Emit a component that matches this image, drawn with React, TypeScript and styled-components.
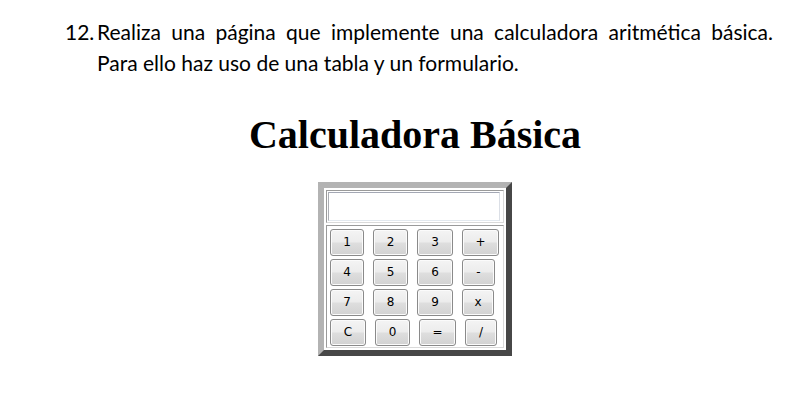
import React from "react";
import styled, { createGlobalStyle } from "styled-components";

const Global = createGlobalStyle`
  html, body { margin: 0; padding: 0; background: #ffffff; }
  body { width: 794px; height: 400px; overflow: hidden; }
`;

const Page = styled.div`
  padding: 16px 21px 0 65px;
`;

const Item = styled.div`
  display: flex;
  font-family: Lato, "Open Sans", sans-serif;
  font-size: 21px;
  line-height: 31px;
  color: #000;
`;

const Num = styled.span`
  flex: 0 0 32px;
`;

const Para = styled.p`
  margin: 0;
  flex: 1;
`;

const Line = styled.span<{ $full?: boolean }>`
  display: block;
  text-align: ${(p) => (p.$full ? "justify" : "left")};
  text-align-last: ${(p) => (p.$full ? "justify" : "left")};
`;

const Figure = styled.div`
  margin-left: -8px;
  display: flex;
  flex-direction: column;
  align-items: center;
`;

const Title = styled.h1`
  margin: 33px 0 0;
  font-family: "Liberation Serif", serif;
  font-weight: bold;
  font-size: 40px;
  line-height: 48px;
  color: #000;
`;

const Frame = styled.div`
  margin-top: 23px;
  width: 178px;
  padding: 2px;
  border: 6px solid;
  border-color: #b3b3b3 #474747 #474747 #b3b3b3;
  display: flex;
  flex-direction: column;
  gap: 2px;
`;

const Cell = styled.div<{ $pad: string }>`
  border: 1px solid;
  border-color: #9a9a9a #dadada #dadada #9a9a9a;
  padding: ${(p) => p.$pad};
`;

const Display = styled.input`
  display: block;
  box-sizing: border-box;
  width: 172px;
  height: 29px;
  margin: 0;
  border: 1px solid #abadb3;
  border-top-color: #a4a8b4;
  border-bottom-color: #e3e9ef;
  border-right-color: #dbdfe6;
  background: #fff;
  outline: none;
`;

const Keys = styled.div`
  display: flex;
  flex-direction: column;
  gap: 3px;
`;

const Row = styled.div`
  display: flex;
  gap: 9px;
`;

const Key = styled.button<{ $w: number }>`
  box-sizing: border-box;
  width: ${(p) => p.$w}px;
  height: 27px;
  padding: 0;
  margin: 0;
  border: 1px solid #8a8a8a;
  border-radius: 3px;
  background: linear-gradient(#f4f4f4 0%, #ececec 48%, #dedede 52%, #d2d2d2 100%);
  box-shadow: inset 0 0 0 1px #fbfbfb;
  font-family: "DejaVu Sans", Verdana, sans-serif;
  font-size: 12px;
  color: #000;
  line-height: 25px;
  text-align: center;
`;

const rows: [string, number][][] = [
  [["1", 34], ["2", 35], ["3", 36], ["+", 37]],
  [["4", 34], ["5", 35], ["6", 36], ["-", 33]],
  [["7", 34], ["8", 35], ["9", 36], ["x", 32]],
  [["C", 36], ["0", 35], ["=", 37], ["/", 32]],
];

export default function App() {
  return (
    <>
      <Global />
      <Page>
        <Item>
          <Num>12.</Num>
          <Para>
            <Line $full>Realiza una página que implemente una calculadora aritmética básica.</Line>
            <Line>Para ello haz uso de una tabla y un formulario.</Line>
          </Para>
        </Item>
        <Figure>
          <Title>Calculadora Básica</Title>
          <Frame>
            <Cell $pad="1px 2px 1px 1px">
              <Display type="text" />
            </Cell>
            <Cell $pad="3px 3px 1px 3px">
              <Keys>
                {rows.map((r, i) => (
                  <Row key={i}>
                    {r.map(([label, w]) => (
                      <Key key={label} $w={w}>
                        {label}
                      </Key>
                    ))}
                  </Row>
                ))}
              </Keys>
            </Cell>
          </Frame>
        </Figure>
      </Page>
    </>
  );
}
